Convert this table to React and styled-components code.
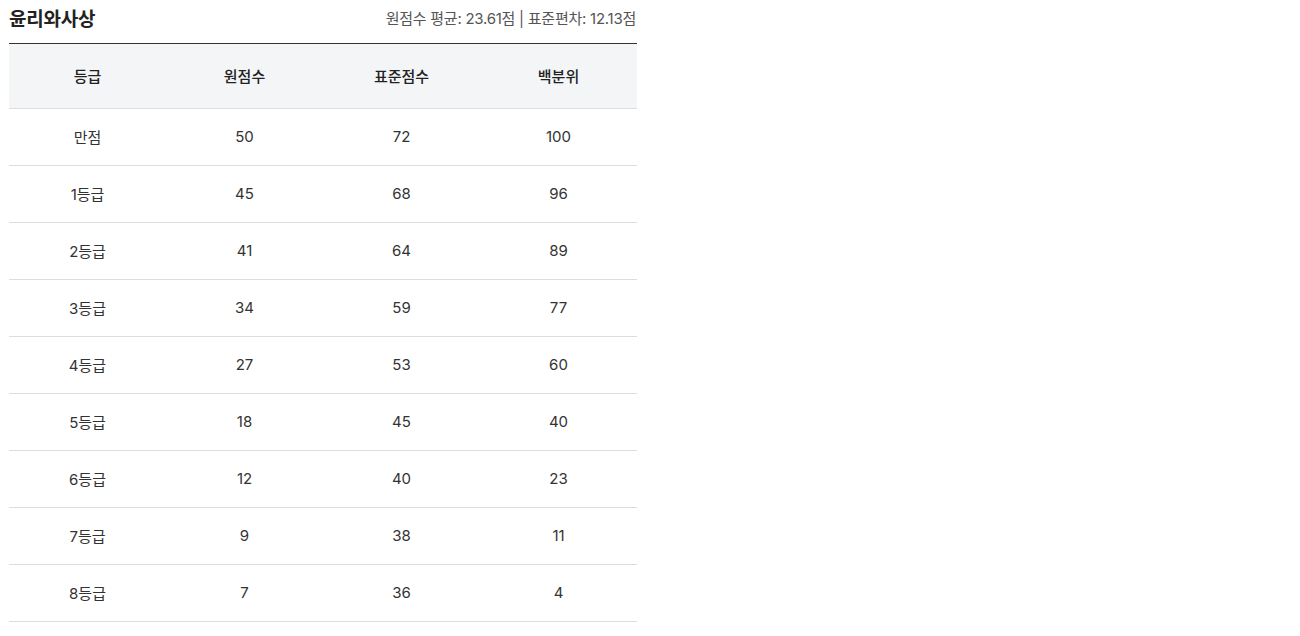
import React from 'react';
import styled, { createGlobalStyle } from 'styled-components';

const GlobalStyle = createGlobalStyle`
    body {
        margin: 0;
        background: #fff;
        font-family: Inter, "Noto Sans CJK KR", sans-serif;
        color: #222;
    }
`;

const Wrapper = styled.div`
    width: 628px;
    padding: 4px 0 0 9px;
`;

const Header = styled.div`
    display: flex;
    justify-content: space-between;
    align-items: center;
    height: 26px;
    margin-bottom: 13px;
`;

const Title = styled.h2`
    margin: 0;
    font-size: 19px;
    font-weight: 700;
    color: #222;
    letter-spacing: -0.2px;
`;

const Stats = styled.span`
    font-size: 15px;
    color: #555;
    letter-spacing: -0.25px;
    margin-right: 1px;
`;

const Table = styled.table`
    width: 100%;
    border-collapse: collapse;
    table-layout: fixed;
    border-top: 1px solid #333;
`;

const HeadCell = styled.th`
    height: 62px;
    padding: 0 0 2px;
    background: #f4f5f7;
    font-size: 15px;
    font-weight: 500;
    color: #222;
    text-align: center;
    border-bottom: 1px solid #ddd;
`;

const Cell = styled.td`
    height: 54px;
    padding: 0 0 2px;
    font-size: 15px;
    color: #333;
    text-align: center;
    border-bottom: 1px solid #ddd;
`;

const rows = [
    ['만점', 50, 72, 100],
    ['1등급', 45, 68, 96],
    ['2등급', 41, 64, 89],
    ['3등급', 34, 59, 77],
    ['4등급', 27, 53, 60],
    ['5등급', 18, 45, 40],
    ['6등급', 12, 40, 23],
    ['7등급', 9, 38, 11],
    ['8등급', 7, 36, 4],
];

const App = () => (
    <>
        <GlobalStyle />
        <Wrapper>
            <Header>
                <Title>윤리와사상</Title>
                <Stats>원점수 평균: 23.61점 | 표준편차: 12.13점</Stats>
            </Header>
            <Table>
                <thead>
                    <tr>
                        {['등급', '원점수', '표준점수', '백분위'].map((h) => (
                            <HeadCell key={h}>{h}</HeadCell>
                        ))}
                    </tr>
                </thead>
                <tbody>
                    {rows.map((row) => (
                        <tr key={row[0]}>
                            {row.map((v, i) => (
                                <Cell key={i}>{v}</Cell>
                            ))}
                        </tr>
                    ))}
                </tbody>
            </Table>
        </Wrapper>
    </>
);

export default App;
